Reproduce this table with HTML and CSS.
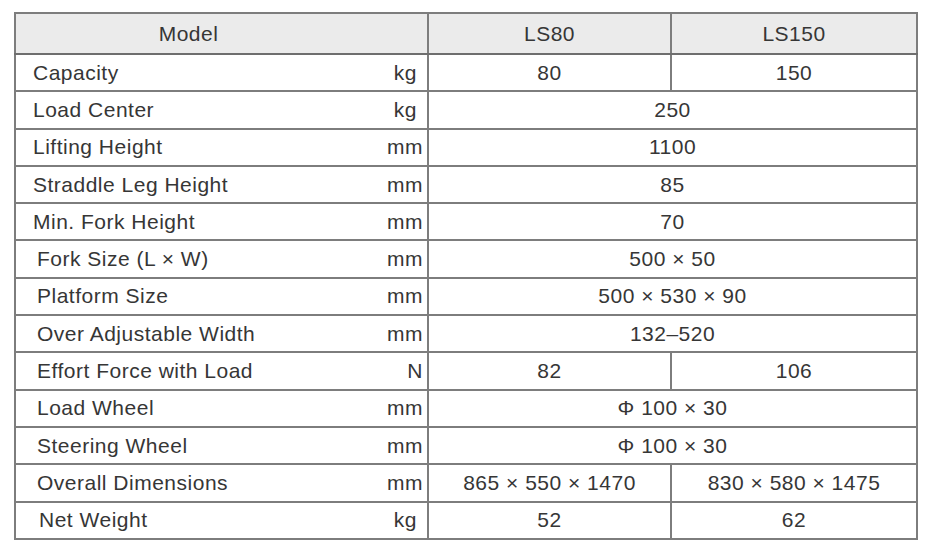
FILE: index.html
```html
<!DOCTYPE html>
<html>
<head>
<meta charset="utf-8">
<link rel="stylesheet" href="styles.css">
</head>
<body>
<table class="spec">
  <colgroup>
    <col class="c-name">
    <col class="c-unit">
    <col class="c-a">
    <col class="c-b">
  </colgroup>
  <thead>
    <tr class="head">
      <th colspan="2" class="model">Model</th>
      <th>LS80</th>
      <th>LS150</th>
    </tr>
  </thead>
  <tbody>
    <tr><td class="name">Capacity</td><td class="unit kg">kg</td><td>80</td><td>150</td></tr>
    <tr><td class="name">Load Center</td><td class="unit kg">kg</td><td colspan="2">250</td></tr>
    <tr><td class="name">Lifting Height</td><td class="unit">mm</td><td colspan="2">1100</td></tr>
    <tr><td class="name">Straddle Leg Height</td><td class="unit">mm</td><td colspan="2">85</td></tr>
    <tr><td class="name">Min. Fork Height</td><td class="unit">mm</td><td colspan="2">70</td></tr>
    <tr><td class="name ind">Fork Size (L × W)</td><td class="unit">mm</td><td colspan="2">500 × 50</td></tr>
    <tr><td class="name ind">Platform Size</td><td class="unit">mm</td><td colspan="2">500 × 530 × 90</td></tr>
    <tr><td class="name ind">Over Adjustable Width</td><td class="unit">mm</td><td colspan="2">132–520</td></tr>
    <tr><td class="name ind">Effort Force with Load</td><td class="unit">N</td><td>82</td><td>106</td></tr>
    <tr><td class="name ind">Load Wheel</td><td class="unit">mm</td><td colspan="2">Φ 100 × 30</td></tr>
    <tr><td class="name ind">Steering Wheel</td><td class="unit">mm</td><td colspan="2">Φ 100 × 30</td></tr>
    <tr><td class="name ind">Overall Dimensions</td><td class="unit">mm</td><td>865 × 550 × 1470</td><td>830 × 580 × 1475</td></tr>
    <tr><td class="name ind2">Net Weight</td><td class="unit kg">kg</td><td>52</td><td>62</td></tr>
  </tbody>
</table>
</body>
</html>
```
FILE: styles.css
```css
html, body {
  margin: 0;
  padding: 0;
  background: #ffffff;
}

.spec {
  margin: 12px 0 0 14px;
  border-collapse: collapse;
  table-layout: fixed;
  width: 902px;
  font-family: "Liberation Sans", Arial, sans-serif;
  font-size: 21px;
  letter-spacing: 0.5px;
  color: #363636;
  border: 2px solid #8c8c8c;
}

.c-name { width: 330px; }
.c-unit { width: 83px; }
.c-a { width: 243px; }
.c-b { width: 246px; }

.spec th,
.spec td {
  border: 2px solid #7d7d7d;
  padding: 0;
  text-align: center;
  font-weight: normal;
  white-space: nowrap;
}

.head {
  height: 41px;
  background: #ebebeb;
}

.head th {
  border-bottom-color: #6e6e6e;
}

.model {
  padding-right: 66px !important;
}

.spec tbody tr {
  height: 37.3px;
}

.spec td.name {
  text-align: left;
  padding-left: 17px;
  border-right: none;
}

.spec td.name.ind {
  padding-left: 21px;
}

.spec td.name.ind2 {
  padding-left: 23px;
}

.spec td.unit {
  text-align: right;
  padding-right: 4px;
  border-left: none;
}

.spec td.unit.kg {
  padding-right: 10px;
}
```
